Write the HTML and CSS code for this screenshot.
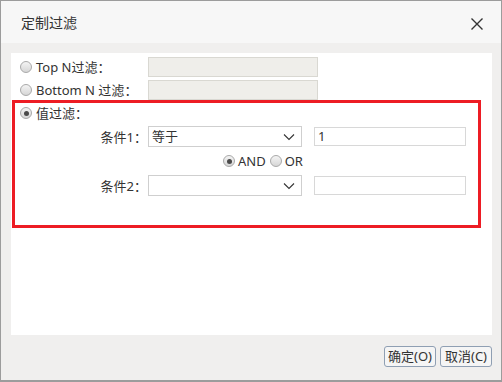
FILE: index.html
```html
<!DOCTYPE html>
<html lang="zh">
<head>
    <meta charset="UTF-8">
    <title>定制过滤</title>
    <link rel="stylesheet" href="styles.css">
</head>
<body>
    <div class="dialog">
        <div class="title-bar">
            <span class="title">定制过滤</span>
            <svg class="close" width="14" height="14" viewBox="0 0 14 14">
                <path d="M1.5 1.5 L12.5 12.5 M12.5 1.5 L1.5 12.5" stroke="#333" stroke-width="1.4" fill="none"/>
            </svg>
        </div>

        <div class="dialog-body">
            <div class="panel">
                <div class="row">
                    <span class="radio"></span>
                    <span class="opt-label">Top N过滤<span class="colon">：</span></span>
                    <span class="field disabled"></span>
                </div>
                <div class="row">
                    <span class="radio"></span>
                    <span class="opt-label">Bottom N 过滤<span class="colon">：</span></span>
                    <span class="field disabled"></span>
                </div>

                <div class="highlight">
                    <div class="row">
                        <span class="radio checked"></span>
                        <span class="opt-label">值过滤<span class="colon">：</span></span>
                    </div>
                    <div class="cond-row">
                        <span class="cond-label">条件1<span class="colon">：</span></span>
                        <span class="select">
                            等于
                            <svg class="chevron" width="12" height="8" viewBox="0 0 12 8"><path d="M1 1.5 L6 6.5 L11 1.5" stroke="#333" stroke-width="1.1" fill="none"/></svg>
                        </span>
                        <span class="text-input">1</span>
                    </div>
                    <div class="logic-row">
                        <span class="radio checked"></span>
                        <span class="logic-label">AND</span>
                        <span class="radio"></span>
                        <span class="logic-label">OR</span>
                    </div>
                    <div class="cond-row">
                        <span class="cond-label">条件2<span class="colon">：</span></span>
                        <span class="select">
                            <svg class="chevron" width="12" height="8" viewBox="0 0 12 8"><path d="M1 1.5 L6 6.5 L11 1.5" stroke="#333" stroke-width="1.1" fill="none"/></svg>
                        </span>
                        <span class="text-input"></span>
                    </div>
                </div>
            </div>

            <div class="footer">
                <button class="btn">确定(O)</button>
                <button class="btn">取消(C)</button>
            </div>
        </div>
    </div>
</body>
</html>
```

FILE: styles.css
```css
* {
    margin: 0;
    padding: 0;
    box-sizing: border-box;
}

body {
    font-family: "Noto Sans", "Noto Sans CJK SC", sans-serif;
    font-size: 13px;
    color: #333;
    background: #fff;
}

.dialog {
    width: 502px;
    height: 382px;
    border: 1px solid #9c9c9c;
    border-bottom-width: 2px;
    background: #f0efee;
    display: flex;
    flex-direction: column;
}

.title-bar {
    height: 42px;
    background: #f7f7f7;
    display: flex;
    align-items: center;
    justify-content: space-between;
    padding: 0 17px 0 20px;
}

.title {
    font-size: 14px;
    color: #333;
    margin-top: -1px;
}

.close {
    margin-top: 4px;
}

.dialog-body {
    padding: 10px 9px 0 10px;
}

.panel {
    background: #fff;
    height: 282px;
    padding-top: 4px;
}

.row {
    display: flex;
    align-items: center;
    height: 20px;
    padding-left: 9px;
}

.row + .row {
    margin-top: 3px;
}

.radio {
    width: 12px;
    height: 12px;
    border-radius: 50%;
    border: 1px solid #a9a9a9;
    background: linear-gradient(#f4f4f4, #d6d6d6);
    display: inline-flex;
    align-items: center;
    justify-content: center;
    flex-shrink: 0;
}

.radio.checked::after {
    content: "";
    width: 5px;
    height: 5px;
    border-radius: 50%;
    background: #4a4a4a;
}

.colon {
    font-family: "Noto Sans CJK TC", sans-serif;
}

.opt-label {
    width: 116px;
    padding-left: 4px;
    line-height: 20px;
}

.field {
    width: 170px;
    height: 20px;
}

.field.disabled {
    background: #efeeea;
    border: 1px solid #d9d8d2;
}

.highlight {
    border: 3px solid #ed1c24;
    width: 469px;
    margin-left: 1px;
    padding-bottom: 29px;
}

.highlight .row {
    padding-left: 5px;
}

.cond-row {
    display: flex;
    align-items: center;
    height: 21px;
    margin-top: 3px;
}

.logic-row + .cond-row {
    margin-top: 4px;
}

.cond-label {
    width: 133px;
    text-align: right;
    padding-right: 1px;
}

.select {
    width: 154px;
    height: 21px;
    border: 1px solid #cfcfcf;
    display: flex;
    align-items: center;
    justify-content: space-between;
    padding: 0 6px 0 3px;
    line-height: 19px;
}

.select .chevron {
    margin-left: auto;
}

.text-input {
    width: 152px;
    height: 19px;
    margin-left: 12px;
    border: 1px solid #d8d8d8;
    padding-left: 3px;
    line-height: 17px;
}

.logic-row {
    display: flex;
    align-items: center;
    height: 20px;
    margin-top: 4px;
    padding-left: 208px;
}

.logic-label {
    padding: 0 4px 0 3px;
}

.footer {
    display: flex;
    justify-content: flex-end;
    gap: 4px;
    padding-top: 11px;
}

.btn {
    font-family: "Noto Sans", "Noto Sans CJK SC", sans-serif;
    font-size: 13px;
    color: #333;
    width: 52px;
    height: 21px;
    border: 1px solid #8f9fb3;
    border-radius: 3px;
    background: #f5f5f5;
    line-height: 19px;
    padding: 0;
}
```
